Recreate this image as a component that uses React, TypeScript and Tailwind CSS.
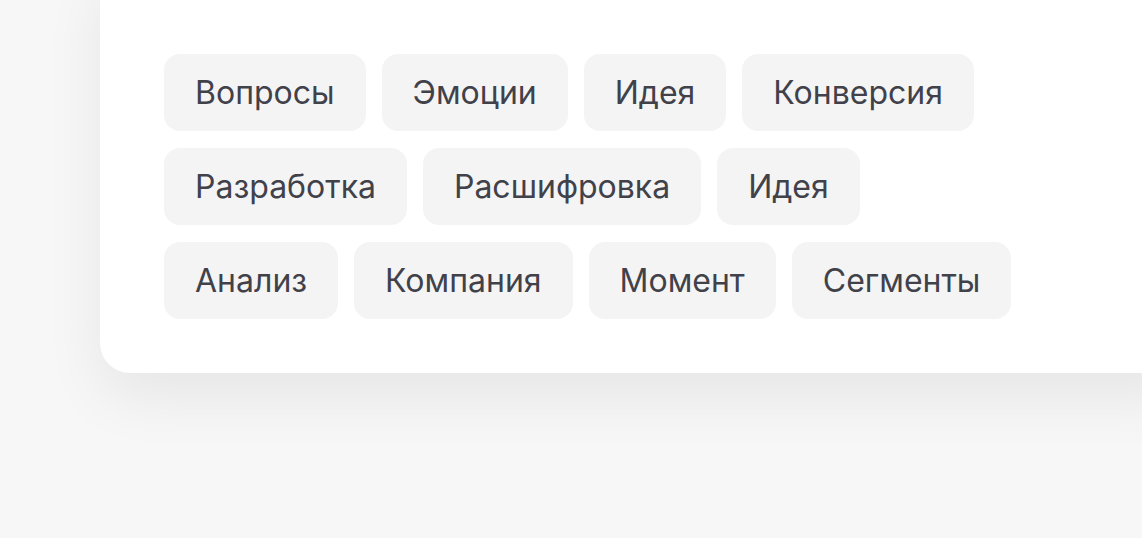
import React from "react";

const rows = [
  ["Вопросы", "Эмоции", "Идея", "Конверсия"],
  ["Разработка", "Расшифровка", "Идея"],
  ["Анализ", "Компания", "Момент", "Сегменты"],
];

export default function App() {
  return (
    <div className="w-[1142px] h-[538px] overflow-hidden bg-[#f7f7f7]" style={{ fontFamily: "Inter, 'Noto Sans', sans-serif" }}>
      <div className="ml-[100px] mt-[-40px] w-[1100px] rounded-[30px] bg-white pl-[64px] pt-[94px] pb-[54px] shadow-[0_24px_60px_rgba(0,0,0,0.07)]">
        <div className="flex flex-col gap-[17px]">
          {rows.map((row, i) => (
            <div key={i} className="flex gap-[16px]">
              {row.map((t, j) => (
                <div
                  key={j}
                  className="h-[77px] flex items-center px-[31px] rounded-[16px] bg-[#f4f4f5] text-[32px] text-[#41414a]"
                >
                  {t}
                </div>
              ))}
            </div>
          ))}
        </div>
      </div>
    </div>
  );
}
